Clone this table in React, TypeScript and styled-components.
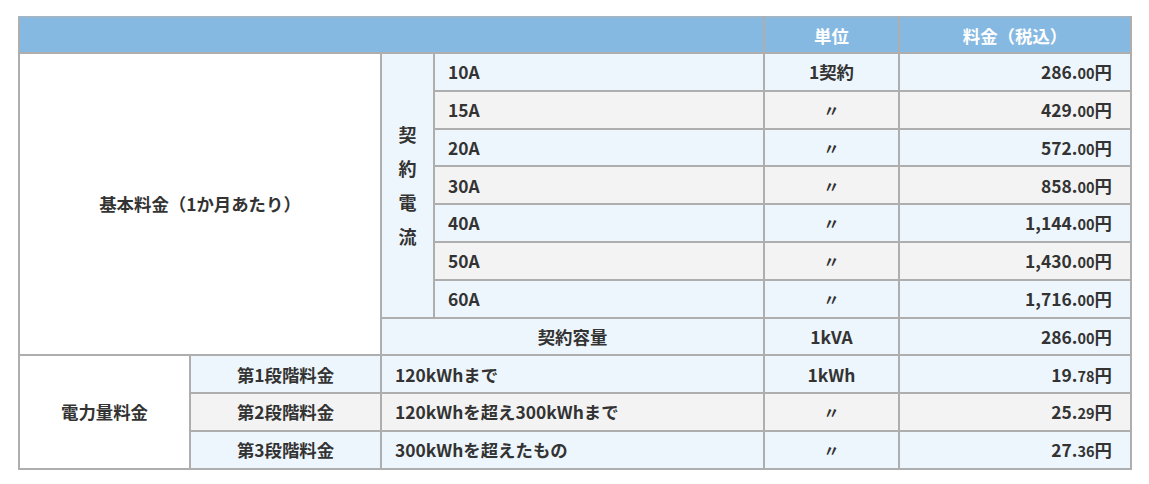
import React from 'react';
import styled, { createGlobalStyle } from 'styled-components';

const GlobalStyle = createGlobalStyle`
  body {
    margin: 0;
    background: #fff;
    font-family: 'Noto Sans CJK JP', 'Noto Sans', sans-serif;
    color: #333;
  }
`;

const Page = styled.div`
  padding: 16px 19px 0 18px;
`;

const Table = styled.table`
  width: 1112px;
  border-collapse: collapse;
  table-layout: fixed;
  font-size: 17.4px;
  font-weight: 700;
`;

const HeadCell = styled.th`
  background: #85b9e1;
  color: #fff;
  font-weight: 700;
  text-align: center;
  height: 34px;
  padding: 0;
  border: 2px solid #aeaeae;
  border-top-color: #9fb6c8;
`;

type Tone = 'white' | 'blue' | 'gray';
const tones: Record<Tone, string> = {
  white: '#fff',
  blue: '#eef6fd',
  gray: '#f3f3f3',
};

const Cell = styled.td<{ $tone?: Tone; $align?: 'left' | 'center' | 'right' }>`
  background: ${({ $tone = 'blue' }) => tones[$tone]};
  text-align: ${({ $align = 'left' }) => $align};
  border: 2px solid #aeaeae;
  height: 35.8px;
  padding: 0 ${({ $align }) => ($align === 'right' ? '18px' : '13px')};
  white-space: nowrap;
  line-height: 1;
`;

const VerticalLabel = styled.div`
  display: flex;
  flex-direction: column;
  align-items: center;
  line-height: 34px;
  font-size: 18px;
`;

const Decimal = styled.span`
  font-size: 14.5px;
  font-weight: 600;
`;

const Ditto = styled.span`
  font-weight: 700;
  font-size: 16px;
`;

type Row = { amp: string; unit: string; price: [string, string] };

const ampRows: Row[] = [
  { amp: '10A', unit: '1契約', price: ['286', '00'] },
  { amp: '15A', unit: '〃', price: ['429', '00'] },
  { amp: '20A', unit: '〃', price: ['572', '00'] },
  { amp: '30A', unit: '〃', price: ['858', '00'] },
  { amp: '40A', unit: '〃', price: ['1,144', '00'] },
  { amp: '50A', unit: '〃', price: ['1,430', '00'] },
  { amp: '60A', unit: '〃', price: ['1,716', '00'] },
];

const tiers = [
  { name: '第1段階料金', range: '120kWhまで', unit: '1kWh', price: ['19', '78'] },
  { name: '第2段階料金', range: '120kWhを超え300kWhまで', unit: '〃', price: ['25', '29'] },
  { name: '第3段階料金', range: '300kWhを超えたもの', unit: '〃', price: ['27', '36'] },
];

const Price = ({ value }: { value: string[] }) => (
  <>
    {value[0]}.<Decimal>{value[1]}</Decimal>円
  </>
);

const Unit = ({ value }: { value: string }) =>
  value === '〃' ? <Ditto>{value}</Ditto> : <>{value}</>;

export default function App() {
  return (
    <Page>
      <GlobalStyle />
      <Table>
        <colgroup>
          <col style={{ width: 171 }} />
          <col style={{ width: 191 }} />
          <col style={{ width: 53 }} />
          <col style={{ width: 330 }} />
          <col style={{ width: 135 }} />
          <col style={{ width: 232 }} />
        </colgroup>
        <thead>
          <tr>
            <HeadCell colSpan={4} />
            <HeadCell>単位</HeadCell>
            <HeadCell>料金（税込）</HeadCell>
          </tr>
        </thead>
        <tbody>
          {ampRows.map((r, i) => {
            const tone: Tone = i % 2 === 0 ? 'blue' : 'gray';
            return (
              <tr key={r.amp}>
                {i === 0 && (
                  <>
                    <Cell rowSpan={8} colSpan={2} $tone="white" $align="center">
                      基本料金（1か月あたり）
                    </Cell>
                    <Cell rowSpan={7} $tone="blue" $align="center" style={{ padding: 0 }}>
                      <VerticalLabel>
                        <span>契</span>
                        <span>約</span>
                        <span>電</span>
                        <span>流</span>
                      </VerticalLabel>
                    </Cell>
                  </>
                )}
                <Cell $tone={tone}>{r.amp}</Cell>
                <Cell $tone={tone} $align="center">
                  <Unit value={r.unit} />
                </Cell>
                <Cell $tone={tone} $align="right">
                  <Price value={r.price} />
                </Cell>
              </tr>
            );
          })}
          <tr>
            <Cell colSpan={2} $align="center">契約容量</Cell>
            <Cell $align="center">1kVA</Cell>
            <Cell $align="right">
              <Price value={['286', '00']} />
            </Cell>
          </tr>
          {tiers.map((t, i) => {
            const tone: Tone = i % 2 === 0 ? 'blue' : 'gray';
            return (
              <tr key={t.name}>
                {i === 0 && (
                  <Cell rowSpan={3} $tone="white" $align="center">
                    電力量料金
                  </Cell>
                )}
                <Cell $tone={tone} $align="center">{t.name}</Cell>
                <Cell $tone={tone} colSpan={2}>{t.range}</Cell>
                <Cell $tone={tone} $align="center">
                  <Unit value={t.unit} />
                </Cell>
                <Cell $tone={tone} $align="right">
                  <Price value={t.price} />
                </Cell>
              </tr>
            );
          })}
        </tbody>
      </Table>
    </Page>
  );
}
